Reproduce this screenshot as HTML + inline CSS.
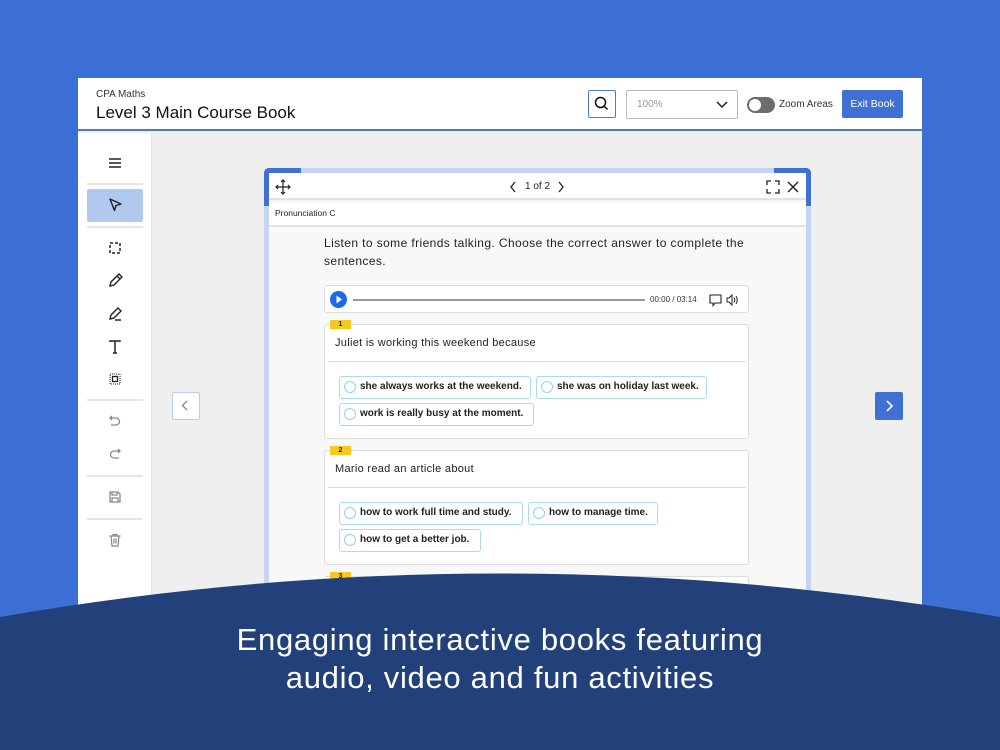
<!DOCTYPE html>
<html><head><meta charset="utf-8"><style>
*{box-sizing:border-box;margin:0;padding:0}
body{width:1000px;height:750px;overflow:hidden;background:#3b6fd4;font-family:"Liberation Sans",sans-serif;position:relative;color:#222}
.abs{position:absolute}
.app{left:78px;top:78px;width:844px;height:560px;background:#efefef;overflow:hidden}
.hdr{left:0;top:0;width:844px;height:53px;background:#fff;border-bottom:2px solid #4a78d6}
.side{left:0;top:55px;width:74px;height:520px;background:#fff;border-right:1px solid #e4e4e4}
.sep{position:absolute;left:9px;width:56px;height:2px;background:#e6e6e6}
.ic{position:absolute;left:27px;width:20px;height:20px}
.book{left:186px;top:90px;width:547px;height:500px;background:#c5d5f3;border-radius:6px 6px 0 0}
.inner{position:absolute;left:5px;top:5px;width:537px;height:495px;background:#f8f8f8}
.opt{position:absolute;height:23px;border:1.5px solid #a9dcef;border-radius:3px;background:#fff;font-size:10px;font-weight:bold;line-height:20px;padding-left:20px;white-space:nowrap;overflow:hidden}
.opt:before{content:"";position:absolute;left:4px;top:4px;width:10px;height:10px;border:1.3px solid #8fd2ee;border-radius:50%}
.card{position:absolute;left:55px;width:425px;background:#fff;border:1px solid #ddd;border-radius:3px}
.num{position:absolute;left:5px;top:-5px;width:21px;height:9px;background:#f8c81c;font-size:7px;font-weight:bold;text-align:center;line-height:9px}
</style></head><body>
<div class="abs app">
 <div class="abs hdr">
  <div class="abs" style="left:18px;top:11px;font-size:10px;color:#333">CPA Maths</div>
  <div class="abs" style="left:18px;top:25px;font-size:17px;color:#111">Level 3 Main Course Book</div>
  <div class="abs" style="left:510px;top:12px;width:28px;height:28px;border:1.5px solid #4a78d6;border-radius:2px">
   <svg width="25" height="25" viewBox="0 0 25 25"><circle cx="11.5" cy="11.5" r="5" fill="none" stroke="#111" stroke-width="1.5"/><line x1="15" y1="15" x2="18.5" y2="18.5" stroke="#111" stroke-width="1.5"/></svg></div>
  <div class="abs" style="left:548px;top:12px;width:112px;height:29px;border:1px solid #bbb;border-radius:2px;font-size:10px;color:#999;line-height:27px;padding-left:10px">100%
   <svg class="abs" style="right:9px;top:9px" width="12" height="10"><path d="M1 2l5 5 5-5" fill="none" stroke="#222" stroke-width="1.5"/></svg></div>
  <div class="abs" style="left:669px;top:19px;width:28px;height:16px;background:#6d6d6d;border-radius:8px"><div class="abs" style="left:2px;top:2px;width:12px;height:12px;background:#fff;border-radius:50%"></div></div>
  <div class="abs" style="left:701px;top:21px;font-size:10px;color:#333">Zoom Areas</div>
  <div class="abs" style="left:764px;top:12px;width:61px;height:28px;background:#3e71d3;border-radius:2px;color:#fff;font-size:10.5px;line-height:28px;text-align:center">Exit Book</div>
 </div>
 <div class="abs side">
  <svg class="ic" style="top:20px" viewBox="0 0 20 20"><path d="M4 6h12M4 10h12M4 14h12" stroke="#222" stroke-width="1.5"/></svg>
  <div class="sep" style="top:50px"></div>
  <div class="abs" style="left:9px;top:56px;width:56px;height:33px;background:#b1c8ef;border-radius:2px"></div>
  <svg class="ic" style="top:62px" viewBox="0 0 20 20"><path d="M5 4l11 5-5 1.5-1.5 5z" fill="none" stroke="#222" stroke-width="1.4" stroke-linejoin="round"/></svg>
  <div class="sep" style="top:93px"></div>
  <svg class="ic" style="top:105px" viewBox="0 0 20 20"><rect x="5" y="5" width="10" height="10" fill="none" stroke="#222" stroke-width="1.5" stroke-dasharray="3 2"/></svg>
  <svg class="ic" style="top:138px" viewBox="0 0 20 20"><path d="M5 15l1-4 8-8 3 3-8 8z M12 5l3 3" fill="none" stroke="#222" stroke-width="1.4"/></svg>
  <svg class="ic" style="top:171px" viewBox="0 0 20 20"><path d="M5 15l1-4 7-7 3 3-7 7z M10 16h6" fill="none" stroke="#222" stroke-width="1.4"/></svg>
  <svg class="ic" style="top:204px" viewBox="0 0 20 20"><path d="M5 5v-1h10v1M10 4v12M8 16h4" fill="none" stroke="#222" stroke-width="1.5"/></svg>
  <svg class="ic" style="top:236px" viewBox="0 0 20 20"><rect x="5" y="5" width="10" height="10" fill="none" stroke="#222" stroke-width="1" stroke-dasharray="1 1"/><rect x="7.5" y="7.5" width="5" height="5" fill="none" stroke="#222" stroke-width="1.3"/></svg>
  <div class="sep" style="top:266px"></div>
  <svg class="ic" style="top:278px" viewBox="0 0 20 20"><path d="M7 5l-2 2 2 2M5 7h6a3.5 3.5 0 010 7H6" fill="none" stroke="#888" stroke-width="1.3"/></svg>
  <svg class="ic" style="top:311px" viewBox="0 0 20 20"><path d="M13 5l2 2-2 2M15 7H9a3.5 3.5 0 000 7h5" fill="none" stroke="#888" stroke-width="1.3"/></svg>
  <div class="sep" style="top:342px"></div>
  <svg class="ic" style="top:354px" viewBox="0 0 20 20"><path d="M5 5h8l2 2v8H5z M7 15v-4h6v4 M7 5v3h5V5" fill="none" stroke="#888" stroke-width="1.3"/></svg>
  <div class="sep" style="top:385px"></div>
  <svg class="ic" style="top:397px" viewBox="0 0 20 20"><path d="M4.5 6h11M8 6V4.5h4V6M6 6l1 10h6l1-10M9 8.5v5M11 8.5v5" fill="none" stroke="#888" stroke-width="1.2"/></svg>
 </div>
 <div class="abs" style="left:94px;top:314px;width:28px;height:28px;background:#fff;border:1.5px solid #b9cdf2;border-radius:2px"><svg width="25" height="25"><path d="M14 8l-4.5 4.5L14 17" fill="none" stroke="#888" stroke-width="1.3"/></svg></div>
 <div class="abs" style="left:797px;top:314px;width:28px;height:28px;background:#3e71d3;border-radius:2px"><svg width="28" height="28"><path d="M12 9l5 5-5 5" fill="none" stroke="#fff" stroke-width="1.6"/></svg></div>
 <div class="abs book">
  <div class="abs" style="left:0;top:0;width:37px;height:5px;background:#3e71d3;border-radius:5px 0 0 0"></div>
  <div class="abs" style="left:0;top:0;width:5px;height:38px;background:#3e71d3;border-radius:5px 0 0 0"></div>
  <div class="abs" style="right:0;top:0;width:37px;height:5px;background:#3e71d3;border-radius:0 5px 0 0"></div>
  <div class="abs" style="right:0;top:0;width:5px;height:38px;background:#3e71d3;border-radius:0 5px 0 0"></div>
  <div class="inner">
   <div class="abs" style="left:0;top:0;width:537px;height:27px;background:#fff;border-bottom:2px solid #e2e2e2">
    <svg class="abs" style="left:6px;top:6px" width="16" height="16" viewBox="0 0 16 16"><path d="M8 1v14M1 8h14M6 3l2-2 2 2M6 13l2 2 2-2M3 6L1 8l2 2M13 6l2 2-2 2" fill="none" stroke="#222" stroke-width="1.2"/></svg>
    <svg class="abs" style="left:240px;top:8px" width="8" height="12"><path d="M6 1L2 6l4 5" fill="none" stroke="#222" stroke-width="1.3"/></svg>
    <div class="abs" style="left:256px;top:8px;font-size:10px">1 of 2</div>
    <svg class="abs" style="left:288px;top:8px" width="8" height="12"><path d="M2 1l4 5-4 5" fill="none" stroke="#222" stroke-width="1.3"/></svg>
    <svg class="abs" style="left:497px;top:7px" width="14" height="14"><path d="M1 5V1h4M9 1h4v4M13 9v4H9M5 13H1V9" fill="none" stroke="#222" stroke-width="1.3"/></svg>
    <svg class="abs" style="left:518px;top:8px" width="12" height="12"><path d="M1 1l10 10M11 1L1 11" stroke="#222" stroke-width="1.4"/></svg>
   </div>
   <div class="abs" style="left:0;top:29px;width:537px;height:25px;background:#fff;border-bottom:2px solid #e2e2e2;font-size:8.5px;line-height:23px;padding-left:6px">Pronunciation C</div>
   <div class="abs" style="left:55px;top:61px;width:440px;font-size:12px;line-height:18px;letter-spacing:.4px;color:#222">Listen to some friends talking. Choose the correct answer to complete the sentences.</div>
   <div class="abs" style="left:55px;top:112px;width:425px;height:28px;background:#fff;border:1px solid #ddd;border-radius:3px">
    <div class="abs" style="left:5px;top:5px;width:17px;height:17px;background:#1c6ae8;border-radius:50%"><svg width="17" height="17"><path d="M6.5 4.5l5.5 4-5.5 4z" fill="#fff"/></svg></div>
    <div class="abs" style="left:28px;top:13px;width:292px;height:2px;background:#999"></div>
    <div class="abs" style="left:325px;top:9px;font-size:8px;color:#333">00:00 / 03:14</div>
    <svg class="abs" style="left:384px;top:7px" width="32" height="14"><path d="M1 2h11v8H6l-2 2.5V10H1z" fill="none" stroke="#222" stroke-width="1.1"/><path d="M18 5h2l3-3v10l-3-3h-2z M25 4.5q1.5 2.5 0 5M27 3q2.5 4 0 8" fill="none" stroke="#222" stroke-width="1"/></svg>
   </div>
   <div class="card" style="top:151px;height:115px">
    <div class="num">1</div>
    <div class="abs" style="left:10px;top:12px;font-size:11px;letter-spacing:.3px">Juliet is working this weekend because</div>
    <div class="abs" style="left:3px;top:36px;width:418px;height:1px;background:#fbd9a6"></div>
    <div class="opt" style="left:14px;top:51px;width:192px">she always works at the weekend.</div>
    <div class="opt" style="left:211px;top:51px;width:171px">she was on holiday last week.</div>
    <div class="opt" style="left:14px;top:78px;width:195px">work is really busy at the moment.</div>
   </div>
   <div class="card" style="top:277px;height:115px">
    <div class="num">2</div>
    <div class="abs" style="left:10px;top:12px;font-size:11px;letter-spacing:.3px">Mario read an article about</div>
    <div class="abs" style="left:3px;top:36px;width:418px;height:1px;background:#fbd9a6"></div>
    <div class="opt" style="left:14px;top:51px;width:184px">how to work full time and study.</div>
    <div class="opt" style="left:203px;top:51px;width:130px">how to manage time.</div>
    <div class="opt" style="left:14px;top:78px;width:142px">how to get a better job.</div>
   </div>
   <div class="card" style="top:403px;height:60px"><div class="num">3</div></div>
  </div>
 </div>
</div>
<svg class="abs" style="left:0;top:560px" width="1000" height="190"><path d="M0 57 Q500 -30 1000 57 V190 H0z" fill="#22407a"/></svg>
<div class="abs" style="left:0;top:621px;width:1000px;text-align:center;color:#fff;font-size:31px;line-height:38px;letter-spacing:.7px">Engaging interactive books featuring<br>audio, video and fun activities</div>
</body></html>
